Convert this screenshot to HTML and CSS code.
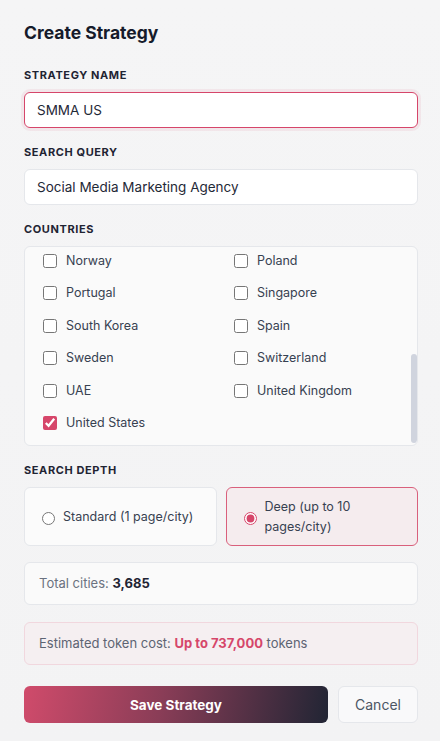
FILE: index.html
```html
<!DOCTYPE html>
<html lang="en">
<head>
<meta charset="utf-8">
<title>Create Strategy</title>
<link rel="stylesheet" href="styles.css">
</head>
<body>
<form class="strategy-form">
  <h1 class="title">Create Strategy</h1>

  <div class="field">
    <label class="field-label" for="name">Strategy Name</label>
    <input id="name" class="text-input is-focused" type="text" value="SMMA US">
  </div>

  <div class="field">
    <label class="field-label" for="query">Search Query</label>
    <input id="query" class="text-input" type="text" value="Social Media Marketing Agency">
  </div>

  <div class="field">
    <span class="field-label">Countries</span>
    <div class="country-box">
      <div class="country-grid">
        <label class="country"><input type="checkbox">Norway</label>
        <label class="country"><input type="checkbox">Poland</label>
        <label class="country"><input type="checkbox">Portugal</label>
        <label class="country"><input type="checkbox">Singapore</label>
        <label class="country"><input type="checkbox">South Korea</label>
        <label class="country"><input type="checkbox">Spain</label>
        <label class="country"><input type="checkbox">Sweden</label>
        <label class="country"><input type="checkbox">Switzerland</label>
        <label class="country"><input type="checkbox">UAE</label>
        <label class="country"><input type="checkbox">United Kingdom</label>
        <label class="country"><input type="checkbox" checked>United States</label>
      </div>
      <span class="scroll-thumb"></span>
    </div>
  </div>

  <div class="field">
    <span class="field-label">Search Depth</span>
    <div class="depth-options">
      <label class="depth-card"><input type="radio" name="depth"><span>Standard (1 page/city)</span></label>
      <label class="depth-card is-selected"><input type="radio" name="depth" checked><span>Deep (up to 10 pages/city)</span></label>
    </div>
  </div>

  <div class="info-box">Total cities: <strong class="info-strong">3,685</strong></div>

  <div class="info-box cost-box">Estimated token cost: <strong class="cost-strong">Up to 737,000</strong> tokens</div>

  <div class="actions">
    <button type="button" class="btn btn-primary">Save Strategy</button>
    <button type="button" class="btn btn-secondary">Cancel</button>
  </div>
</form>
</body>
</html>
```
FILE: styles.css
```css
* { box-sizing: border-box; }

html, body {
  margin: 0;
  height: 100%;
}

body {
  background: linear-gradient(180deg, #f5f5f6 0%, #f3f3f4 100%);
  font-family: Inter, "Noto Sans", "Liberation Sans", sans-serif;
  color: #1f2937;
  -webkit-font-smoothing: antialiased;
}

.strategy-form {
  display: flex;
  flex-direction: column;
  padding: 20px 22px 0 24px;
}

.title {
  margin: 0 0 21px;
  font-size: 17.5px;
  line-height: 26px;
  font-weight: 700;
  color: #161b2b;
}

.field {
  display: flex;
  flex-direction: column;
  margin-bottom: 16px;
}

.field-label {
  display: block;
  font-size: 11px;
  line-height: 16px;
  font-weight: 700;
  letter-spacing: 0.055em;
  text-transform: uppercase;
  color: #1f2433;
  margin-bottom: 9px;
}

.text-input {
  width: 100%;
  height: 36px;
  padding: 0 12px;
  border: 1px solid #e5e7eb;
  border-radius: 6px;
  background: #ffffff;
  font-family: inherit;
  font-size: 13.5px;
  color: #1f2937;
  outline: none;
}

.text-input.is-focused {
  border-color: #d6466a;
  box-shadow: 0 0 0 3px rgba(214, 70, 106, 0.08);
}

.country-box {
  position: relative;
  height: 200px;
  border: 1px solid #e5e7eb;
  border-radius: 6px;
  background: #fafafa;
  overflow: hidden;
}

.scroll-thumb {
  position: absolute;
  right: 0;
  top: 107px;
  width: 6px;
  height: 89px;
  border-radius: 3px;
  background: #d0d4de;
}

.country-grid {
  display: grid;
  grid-template-columns: 1fr 1fr;
  column-gap: 24px;
  row-gap: 12.4px;
  padding: 4px 16px 12px 18px;
}

.country {
  display: flex;
  align-items: center;
  gap: 9px;
  font-size: 12.5px;
  line-height: 20px;
  color: #374151;
  white-space: nowrap;
}

.country input {
  width: 14px;
  height: 14px;
  margin: 0;
  accent-color: #d6466a;
}

.depth-options {
  display: grid;
  grid-template-columns: 1fr 1fr;
  gap: 9px;
}

.depth-card {
  display: flex;
  align-items: center;
  gap: 8px;
  padding: 8.5px 12px 8.5px 17px;
  min-height: 59px;
  border: 1px solid #e5e7eb;
  border-radius: 6px;
  background: #fbfbfb;
  font-size: 12.5px;
  line-height: 20px;
  color: #374151;
}

.depth-card input {
  width: 13px;
  height: 13px;
  margin: 3px 0 0 0;
  flex: none;
  accent-color: #d6466a;
}

.depth-card.is-selected {
  background: #f5ecee;
  border-color: #d9607c;
}

.info-box {
  padding: 11px 14px;
  border: 1px solid #e5e7eb;
  border-radius: 6px;
  background: #fafafa;
  font-size: 13px;
  line-height: 19px;
  color: #6b7280;
  margin-bottom: 17px;
}

.info-strong {
  color: #1f2433;
  font-weight: 700;
}

.cost-box {
  background: #f5eff1;
  border-color: #f1d7de;
  color: #5d6473;
  margin-bottom: 21px;
}

.cost-strong {
  color: #d6466a;
  font-weight: 700;
}

.actions {
  display: flex;
  gap: 10px;
}

.btn {
  height: 37px;
  border-radius: 6px;
  font-family: inherit;
  font-size: 14px;
  cursor: pointer;
}

.btn-primary {
  flex: 1;
  border: none;
  background: linear-gradient(100deg, #d04b6b 0%, #8a3d57 45%, #212534 100%);
  color: #ffffff;
  font-size: 13.5px;
  font-weight: 700;
}

.btn-secondary {
  width: 80px;
  border: 1px solid #e5e7eb;
  background: #f9f9fa;
  color: #4b5563;
}
```
